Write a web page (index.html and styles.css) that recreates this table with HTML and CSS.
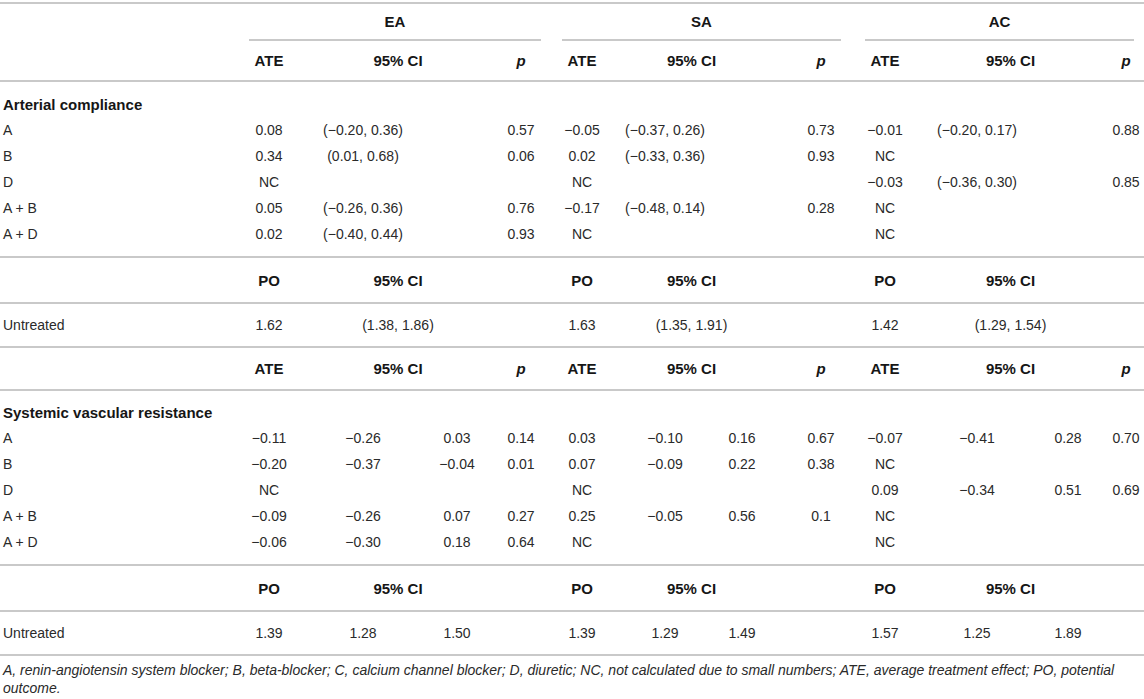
FILE: index.html
```html
<!DOCTYPE html>
<html lang="en">
<head>
<meta charset="utf-8">
<title>Table</title>
<link rel="stylesheet" href="styles.css">
</head>
<body>
<div class="table">
  <div class="row group-row">
    <div class="cell grp ea-g">EA</div>
    <div class="cell grp sa-g">SA</div>
    <div class="cell grp ac-g">AC</div>
  </div>
  <div class="row head-row line">
    <div class="cell b c2">ATE</div><div class="cell b ci ea-ci">95% CI</div><div class="cell b pi c8">p</div>
    <div class="cell b c10">ATE</div><div class="cell b ci sa-ci">95% CI</div><div class="cell b pi c16">p</div>
    <div class="cell b c18">ATE</div><div class="cell b ci ac-ci">95% CI</div><div class="cell b pi c24">p</div>
  </div>

  <div class="section line">
    <div class="row data"><div class="cell lab b title">Arterial compliance</div></div>
    <div class="row data">
      <div class="cell lab">A</div>
      <div class="cell c2">0.08</div><div class="cell c4">(−0.20, 0.36)</div><div class="cell c8">0.57</div>
      <div class="cell c10">−0.05</div><div class="cell c12">(−0.37, 0.26)</div><div class="cell c16">0.73</div>
      <div class="cell c18">−0.01</div><div class="cell c20">(−0.20, 0.17)</div><div class="cell c24">0.88</div>
    </div>
    <div class="row data">
      <div class="cell lab">B</div>
      <div class="cell c2">0.34</div><div class="cell c4">(0.01, 0.68)</div><div class="cell c8">0.06</div>
      <div class="cell c10">0.02</div><div class="cell c12">(−0.33, 0.36)</div><div class="cell c16">0.93</div>
      <div class="cell c18">NC</div>
    </div>
    <div class="row data">
      <div class="cell lab">D</div>
      <div class="cell c2">NC</div>
      <div class="cell c10">NC</div>
      <div class="cell c18">−0.03</div><div class="cell c20">(−0.36, 0.30)</div><div class="cell c24">0.85</div>
    </div>
    <div class="row data">
      <div class="cell lab">A + B</div>
      <div class="cell c2">0.05</div><div class="cell c4">(−0.26, 0.36)</div><div class="cell c8">0.76</div>
      <div class="cell c10">−0.17</div><div class="cell c12">(−0.48, 0.14)</div><div class="cell c16">0.28</div>
      <div class="cell c18">NC</div>
    </div>
    <div class="row data">
      <div class="cell lab">A + D</div>
      <div class="cell c2">0.02</div><div class="cell c4">(−0.40, 0.44)</div><div class="cell c8">0.93</div>
      <div class="cell c10">NC</div>
      <div class="cell c18">NC</div>
    </div>
  </div>

  <div class="row po-row line">
    <div class="cell b c2">PO</div><div class="cell b ci ea-ci">95% CI</div>
    <div class="cell b c10">PO</div><div class="cell b ci sa-ci">95% CI</div>
    <div class="cell b c18">PO</div><div class="cell b ci ac-ci">95% CI</div>
  </div>
  <div class="row un-row line">
    <div class="cell lab">Untreated</div>
    <div class="cell c2">1.62</div><div class="cell ci ea-ci">(1.38, 1.86)</div>
    <div class="cell c10">1.63</div><div class="cell ci sa-ci">(1.35, 1.91)</div>
    <div class="cell c18">1.42</div><div class="cell ci ac-ci">(1.29, 1.54)</div>
  </div>

  <div class="row head-row2 line">
    <div class="cell b c2">ATE</div><div class="cell b ci ea-ci">95% CI</div><div class="cell b pi c8">p</div>
    <div class="cell b c10">ATE</div><div class="cell b ci sa-ci">95% CI</div><div class="cell b pi c16">p</div>
    <div class="cell b c18">ATE</div><div class="cell b ci ac-ci">95% CI</div><div class="cell b pi c24">p</div>
  </div>

  <div class="section section2 line">
    <div class="row data"><div class="cell lab b title">Systemic vascular resistance</div></div>
    <div class="row data">
      <div class="cell lab">A</div>
      <div class="cell c2">−0.11</div><div class="cell c4">−0.26</div><div class="cell c6">0.03</div><div class="cell c8">0.14</div>
      <div class="cell c10">0.03</div><div class="cell c12">−0.10</div><div class="cell c14">0.16</div><div class="cell c16">0.67</div>
      <div class="cell c18">−0.07</div><div class="cell c20">−0.41</div><div class="cell c22">0.28</div><div class="cell c24">0.70</div>
    </div>
    <div class="row data">
      <div class="cell lab">B</div>
      <div class="cell c2">−0.20</div><div class="cell c4">−0.37</div><div class="cell c6">−0.04</div><div class="cell c8">0.01</div>
      <div class="cell c10">0.07</div><div class="cell c12">−0.09</div><div class="cell c14">0.22</div><div class="cell c16">0.38</div>
      <div class="cell c18">NC</div>
    </div>
    <div class="row data">
      <div class="cell lab">D</div>
      <div class="cell c2">NC</div>
      <div class="cell c10">NC</div>
      <div class="cell c18">0.09</div><div class="cell c20">−0.34</div><div class="cell c22">0.51</div><div class="cell c24">0.69</div>
    </div>
    <div class="row data">
      <div class="cell lab">A + B</div>
      <div class="cell c2">−0.09</div><div class="cell c4">−0.26</div><div class="cell c6">0.07</div><div class="cell c8">0.27</div>
      <div class="cell c10">0.25</div><div class="cell c12">−0.05</div><div class="cell c14">0.56</div><div class="cell c16">0.1</div>
      <div class="cell c18">NC</div>
    </div>
    <div class="row data">
      <div class="cell lab">A + D</div>
      <div class="cell c2">−0.06</div><div class="cell c4">−0.30</div><div class="cell c6">0.18</div><div class="cell c8">0.64</div>
      <div class="cell c10">NC</div>
      <div class="cell c18">NC</div>
    </div>
  </div>

  <div class="row po-row line">
    <div class="cell b c2">PO</div><div class="cell b ci ea-ci">95% CI</div>
    <div class="cell b c10">PO</div><div class="cell b ci sa-ci">95% CI</div>
    <div class="cell b c18">PO</div><div class="cell b ci ac-ci">95% CI</div>
  </div>
  <div class="row un-row line">
    <div class="cell lab">Untreated</div>
    <div class="cell c2">1.39</div><div class="cell c4">1.28</div><div class="cell c6">1.50</div>
    <div class="cell c10">1.39</div><div class="cell c12">1.29</div><div class="cell c14">1.49</div>
    <div class="cell c18">1.57</div><div class="cell c20">1.25</div><div class="cell c22">1.89</div>
  </div>
</div>
<p class="note">A, renin-angiotensin system blocker; B, beta-blocker; C, calcium channel blocker; D, diuretic; NC, not calculated due to small numbers; ATE, average treatment effect; PO, potential outcome.</p>
</body>
</html>
```

FILE: styles.css
```css
html, body {
  margin: 0;
  padding: 0;
  overflow: hidden;
  background: #ffffff;
}

body {
  width: 1144px;
  font-family: "Liberation Sans", Arial, Helvetica, sans-serif;
  font-size: 14px;
  color: #2a2a2a;
}

.table {
  margin-top: 2px;
  border-top: 2px solid #c9c9c9;
}

.row {
  display: grid;
  grid-template-columns:
    249px 40px 54px 40px 54px 40px 24px 40px 21px 40px
    43px 40px 37px 40px 39px 40px 24px 40px 52px 40px
    51px 40px 20px 36px;
  align-items: center;
}

.line {
  border-bottom: 2px solid #c9c9c9;
}

.cell {
  display: flex;
  justify-content: center;
  white-space: nowrap;
  min-width: 0;
}

.lab {
  grid-column: 1 / 2;
  justify-content: flex-start;
  padding-left: 3px;
}

.b {
  font-weight: bold;
  color: #161616;
  font-size: 15px;
}

.pi {
  font-style: italic;
}

.title {
  grid-column: 1 / 12;
}

.c2 { grid-column: 2 / 3; }
.c4 { grid-column: 4 / 5; }
.c6 { grid-column: 6 / 7; }
.c8 { grid-column: 8 / 9; }
.c10 { grid-column: 10 / 11; }
.c12 { grid-column: 12 / 13; }
.c14 { grid-column: 14 / 15; }
.c16 { grid-column: 16 / 17; }
.c18 { grid-column: 18 / 19; }
.c20 { grid-column: 20 / 21; }
.c22 { grid-column: 22 / 23; }
.c24 { grid-column: 24 / 25; }

.ea-ci { grid-column: 4 / 7; }
.sa-ci { grid-column: 12 / 15; }
.ac-ci { grid-column: 20 / 23; }

.ci {
  padding-right: 24px;
}

.group-row {
  height: 37px;
  align-items: stretch;
}

.grp {
  font-weight: bold;
  font-size: 15px;
  color: #161616;
  align-items: center;
  border-bottom: 2px solid #c9c9c9;
}

.ea-g { grid-column: 2 / 9; }
.sa-g { grid-column: 10 / 17; }
.ac-g { grid-column: 18 / 25; margin-right: 10px; }

.head-row {
  height: 39px;
}

.section {
  padding-top: 9px;
  padding-bottom: 9px;
}

.section2 {
  padding-top: 8px;
}

.data {
  height: 26px;
}

.po-row {
  height: 44px;
}

.un-row {
  height: 42px;
}

.head-row2 {
  height: 41px;
}

.note {
  margin: 5px 0 0 0;
  padding-left: 3px;
  width: 1136px;
  font-style: italic;
  font-size: 14px;
  line-height: 18px;
  color: #2a2a2a;
}
```
